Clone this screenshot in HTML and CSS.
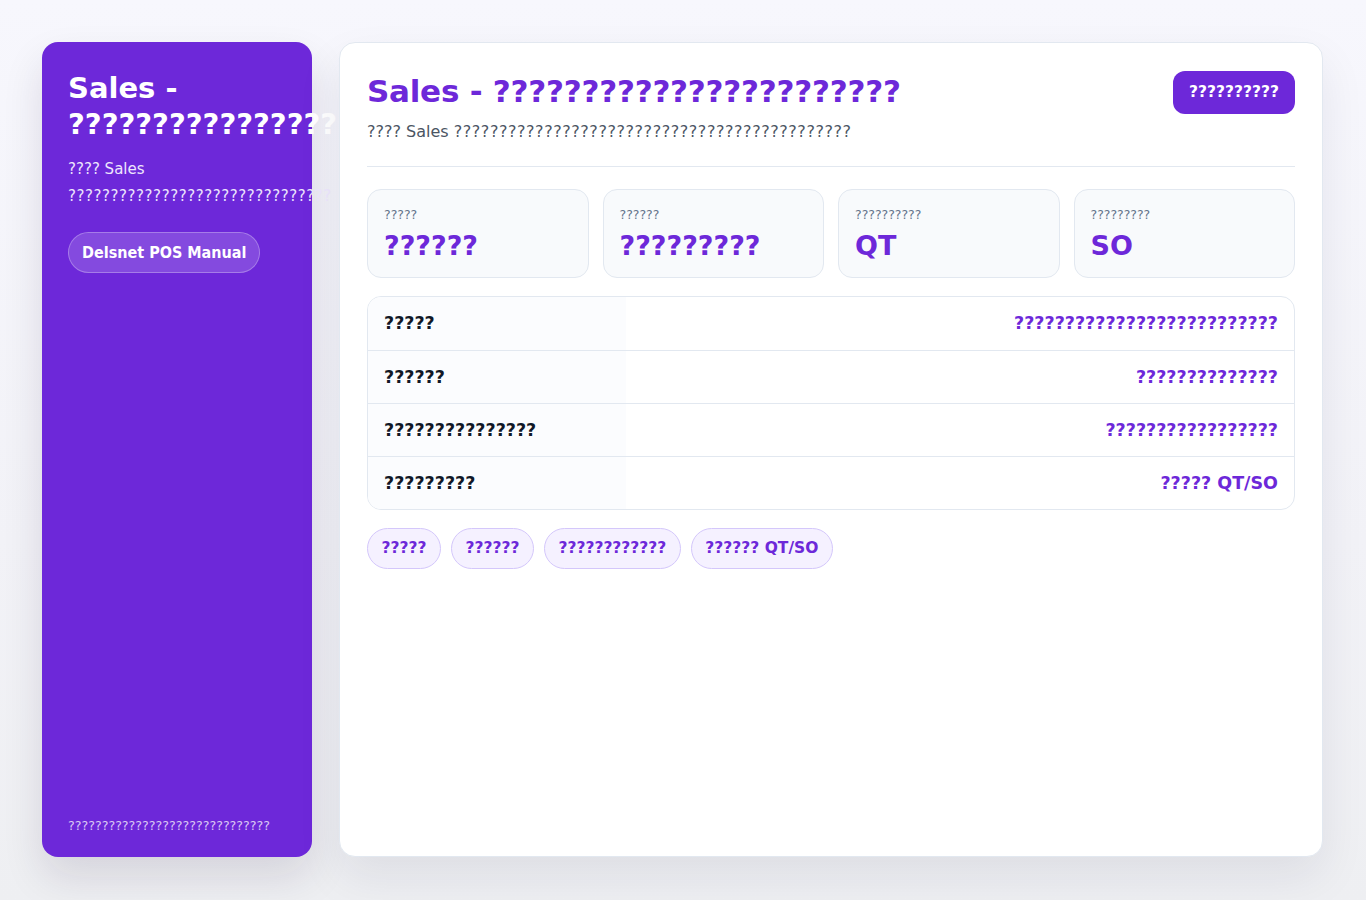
FILE: index.html
```html
<!DOCTYPE html>
<html lang="th">
<head>
<meta charset="utf-8">
<title>Sales</title>
<link rel="stylesheet" href="styles.css">
</head>
<body>
<div class="layout">
  <aside class="sidebar">
    <div class="side-top">
      <h1 class="side-title">Sales - ????????????????</h1>
      <p class="side-sub">???? Sales <span class="q">???????????????????????????????</span></p>
      <a class="side-btn">Delsnet POS Manual</a>
    </div>
    <div class="side-foot">??????????????????????????????</div>
  </aside>
  <main class="card">
    <header class="head">
      <div class="head-text">
        <h2 class="title">Sales - ???????????????????????</h2>
        <p class="sub">???? Sales <span class="q">????????????????????????????????????????????</span></p>
      </div>
      <a class="primary-btn">??????????</a>
    </header>
    <section class="stats">
      <div class="stat"><div class="stat-label">?????</div><div class="stat-value">??????</div></div>
      <div class="stat"><div class="stat-label">??????</div><div class="stat-value">?????????</div></div>
      <div class="stat"><div class="stat-label">??????????</div><div class="stat-value">QT</div></div>
      <div class="stat"><div class="stat-label">?????????</div><div class="stat-value">SO</div></div>
    </section>
    <div class="table-wrap">
      <table class="info">
        <tr><th>?????</th><td>??????????????????????????</td></tr>
        <tr><th>??????</th><td>??????????????</td></tr>
        <tr><th>???????????????</th><td>?????????????????</td></tr>
        <tr><th>?????????</th><td>????? QT/SO</td></tr>
      </table>
    </div>
    <div class="chips">
      <span class="chip">?????</span>
      <span class="chip">??????</span>
      <span class="chip">????????????</span>
      <span class="chip">?????? QT/SO</span>
    </div>
  </main>
</div>
</body>
</html>
```

FILE: styles.css
```css
* { box-sizing: border-box; }
html, body { margin: 0; height: 100%; }
body {
  font-family: "DejaVu Sans", Verdana, sans-serif;
  background: linear-gradient(180deg, #f7f7fd 0%, #f2f2f7 60%, #eeeff2 100%);
  color: #111827;
}
.layout {
  display: flex;
  gap: 27px;
  padding: 42px 43px 43px 42px;
  height: 900px;
}
.sidebar {
  width: 270px;
  flex: none;
  background: #6d28d9;
  border-radius: 16px;
  padding: 28px 26px 24px;
  display: flex;
  flex-direction: column;
  justify-content: space-between;
  color: #fff;
  box-shadow: 0 20px 40px rgba(30, 20, 60, 0.12);
}
.side-title {
  margin: 0;
  font-size: 29px;
  line-height: 36px;
  font-weight: 700;
}
.side-sub {
  margin: 14px 0 0;
  font-size: 15px;
  line-height: 27px;
  color: #ede6fd;
}
.q { letter-spacing: 0.55px; }
.side-btn {
  display: inline-block;
  margin-top: 22px;
  height: 41px;
  line-height: 39px;
  padding: 0 13px;
  border-radius: 21px;
  background: rgba(255, 255, 255, 0.16);
  border: 1px solid rgba(255, 255, 255, 0.28);
  font-family: "DejaVu Sans Condensed", "DejaVu Sans", sans-serif;
  font-weight: 700;
  font-size: 16px;
  color: #fff;
}
.side-foot {
  font-size: 12.7px;
  color: rgba(255, 255, 255, 0.75);
}
.card {
  flex: 1;
  background: #fff;
  border: 1px solid #e2e8f0;
  border-radius: 16px;
  padding: 28px 27px;
  box-shadow: 0 20px 45px rgba(30, 30, 60, 0.08);
}
.head {
  display: flex;
  justify-content: space-between;
  align-items: flex-start;
  padding-bottom: 23px;
  border-bottom: 1px solid #e2e8f0;
}
.title {
  margin: 1px 0 0;
  font-size: 31px;
  line-height: 38px;
  letter-spacing: -0.25px;
  font-weight: 700;
  color: #6d28d9;
}
.sub {
  margin: 11px 0 0;
  font-size: 16px;
  line-height: 22px;
  color: #4b5563;
}
.primary-btn {
  background: #6d28d9;
  color: #fff;
  font-weight: 700;
  font-size: 15.5px;
  height: 43px;
  line-height: 43px;
  padding: 0 16px;
  border-radius: 12px;
}
.stats {
  display: grid;
  grid-template-columns: repeat(4, 1fr);
  gap: 14px;
  margin-top: 22px;
}
.stat {
  background: #f8fafc;
  border: 1px solid #e2e8f0;
  border-radius: 14px;
  padding: 17px 16px 16px;
  height: 89px;
}
.stat-label {
  font-size: 12.5px;
  color: #64748b;
  line-height: 16px;
}
.stat-value {
  margin-top: 6px;
  font-size: 27px;
  font-weight: 700;
  color: #6d28d9;
  line-height: 34px;
}
.table-wrap {
  margin-top: 18px;
  border: 1px solid #e2e8f0;
  border-radius: 14px;
  overflow: hidden;
}
.info {
  width: 100%;
  border-collapse: collapse;
}
.info tr + tr th, .info tr + tr td { border-top: 1px solid #e2e8f0; }
.info th, .info td {
  height: 53px;
  padding: 0 16px;
  font-size: 17.5px;
  font-weight: 700;
}
.info th {
  width: 258px;
  text-align: left;
  background: #fbfcfe;
  color: #111827;
}
.info td {
  text-align: right;
  color: #6d28d9;
}
.chips {
  display: flex;
  gap: 10px;
  margin-top: 18px;
}
.chip {
  height: 41px;
  line-height: 39px;
  padding: 0 13.5px;
  border-radius: 21px;
  background: #f5f1ff;
  border: 1px solid #d4c7fb;
  color: #6d28d9;
  font-weight: 700;
  font-size: 15.5px;
}
```
